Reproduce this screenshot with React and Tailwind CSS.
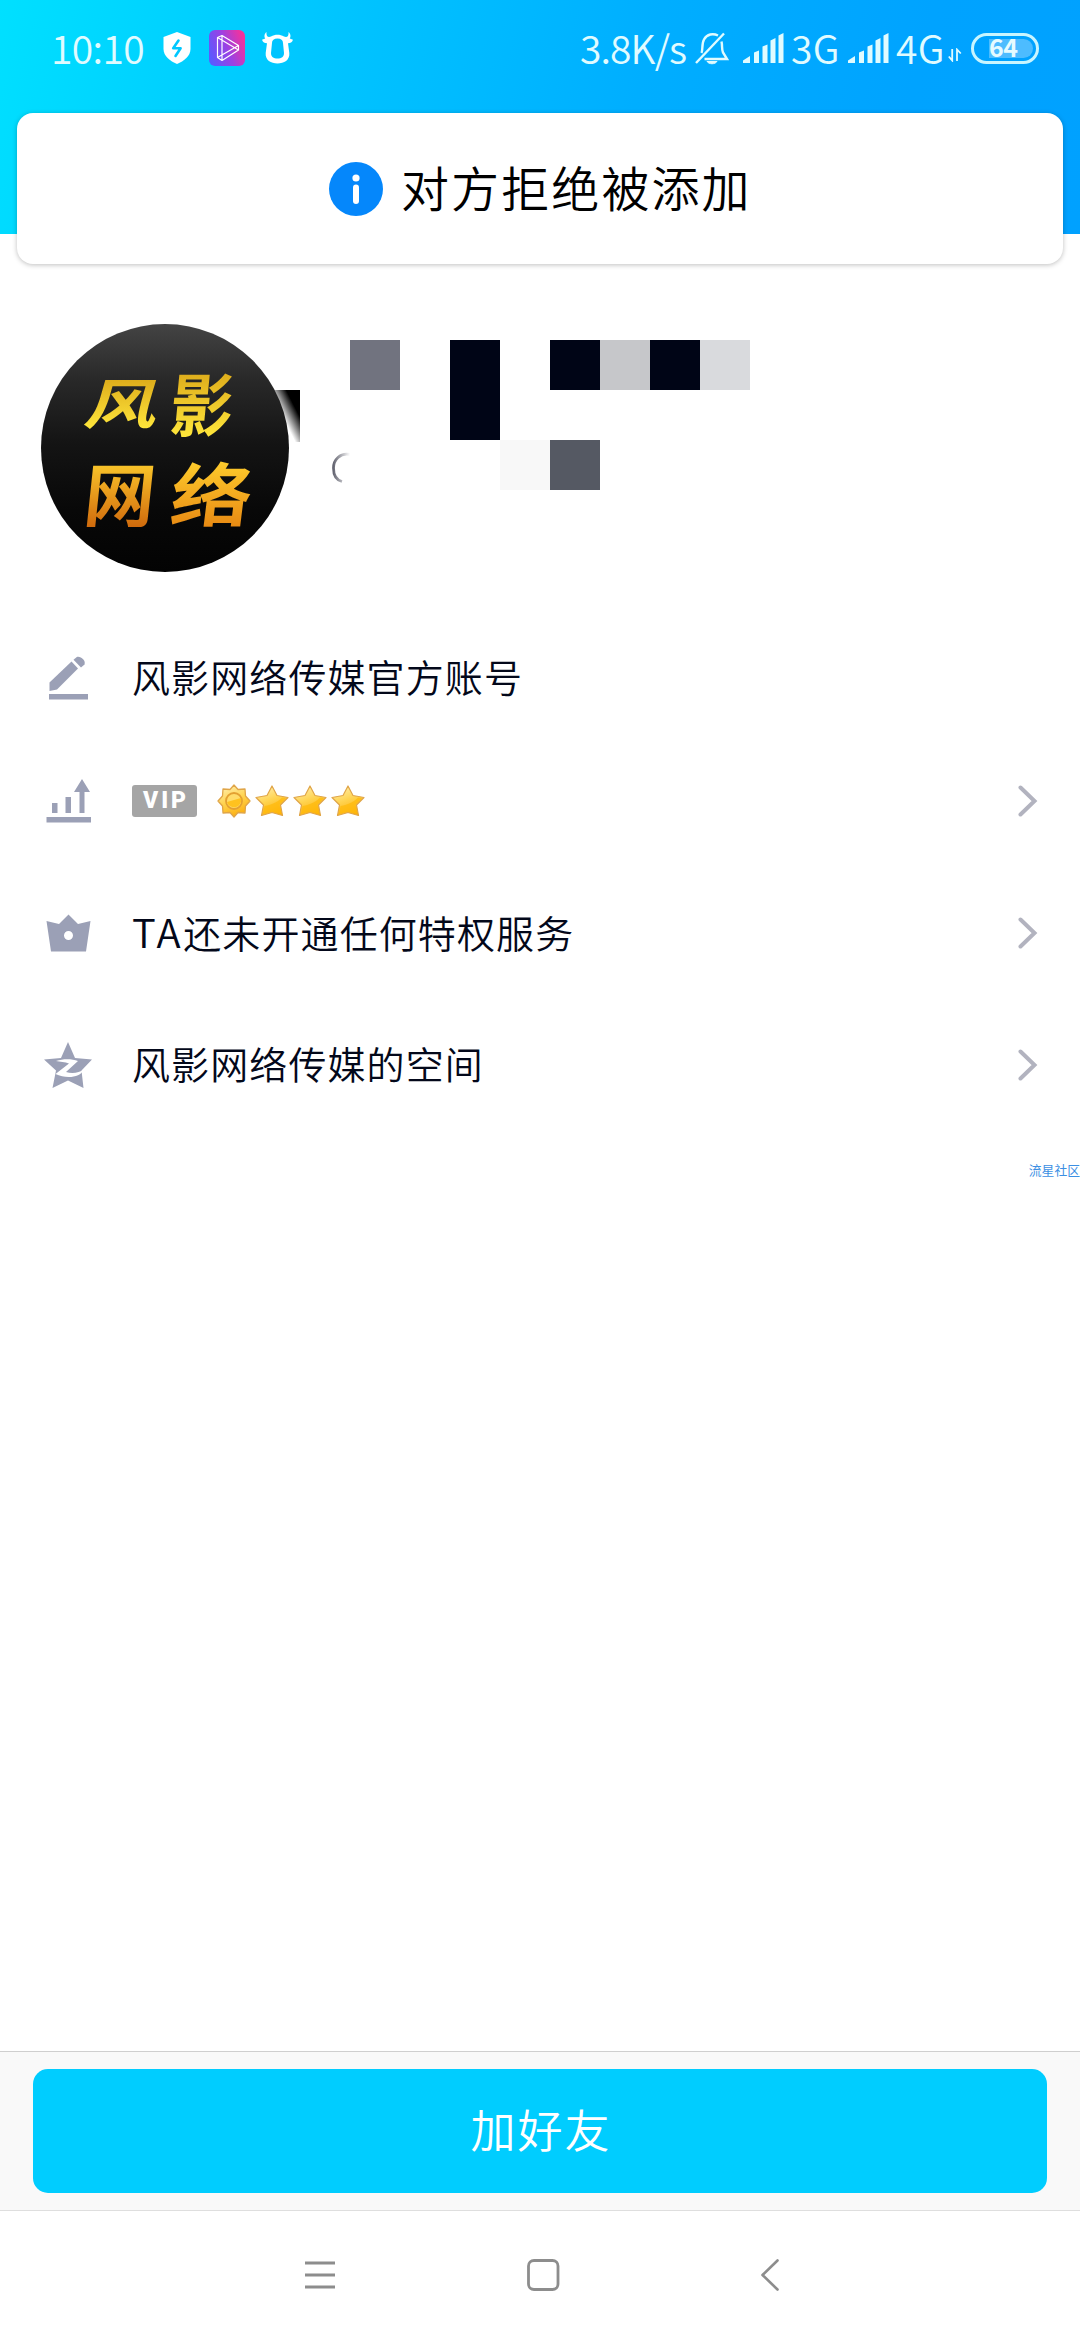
import React from 'react';

const mosaicRows = [
    ['bg-[#71737f]', '', 'bg-[#000516]', '', 'bg-[#000516]', 'bg-[#c6c7ca]', 'bg-[#000516]', 'bg-[#d9dadd]'],
    ['', '', 'bg-[#000516]', '', '', '', '', ''],
    ['', '', '', 'bg-[#f8f8f8]', 'bg-[#555963]', '', '', ''],
];

const SignalIcon = ({ className }) => (
    <svg className={className} width="41" height="30" viewBox="0 0 41 30" fill="#e0fbff">
        <path d="M0 30V27.5L7 23V30Z" />
        <path d="M11 30V19.5L16 17.5V30Z" />
        <path d="M19.5 30V13.5L24.5 11.5V30Z" />
        <path d="M27.5 30V7.5L32.5 5V30Z" />
        <path d="M35.5 30V2.5L40.5 0V30Z" />
    </svg>
);

const StatusText = ({ className, children }) => (
    <div className={`-mt-[3px] whitespace-nowrap ${className}`}>{children}</div>
);

const StatusBar = () => (
    <div className="flex h-[113px] items-start pt-[30px] text-[39px] leading-[40px] font-[350] text-[#e0fbff]">
        <StatusText className="ml-[51px] w-[112px] tracking-[-0.6px]">10:10</StatusText>
        <svg className="mt-[2px]" width="28" height="32" viewBox="0 0 28 32">
            <path d="M14 0L27.5 5V17C27.5 24 21 29 14 32C7 29 .5 24 .5 17V5Z" fill="#fff" />
            <path d="M15.5 8.5L10.2 16.2H17.6L12.5 24" fill="none" stroke="#00c8ff" strokeWidth="2.6" strokeLinejoin="round" strokeLinecap="round" />
        </svg>
        <svg className="ml-[18px]" width="36" height="36" viewBox="0 0 36 36">
            <defs>
                <linearGradient id="player" x1="0" y1=".7" x2="1" y2=".3">
                    <stop offset="0" stopColor="#5a5aff" />
                    <stop offset=".5" stopColor="#9a42e4" />
                    <stop offset="1" stopColor="#f5329b" />
                </linearGradient>
            </defs>
            <rect width="36" height="36" rx="6" fill="url(#player)" />
            <path d="M8.5 7.5L13 5.5L29.5 15.5V20L13 30.5L8.5 27.5ZM13 5.5V30.5M8.5 7.5L29.5 20M8.5 27.5L29.5 15.5" fill="none" stroke="#fff" strokeWidth="1.2" strokeLinejoin="round" />
        </svg>
        <svg className="ml-[17px] mt-[2px]" width="31" height="32" viewBox="0 0 31 32">
            <path d="M4.500 0C4 4 6 6 9 4.500C13 2 18 2 22 4.500C25 6 27 4 26.500 0C29 2 28.800 5 27.800 6.500L31 7.800C30 10.500 28.500 11.300 26 11.300L27.300 21C28 28 22 31.500 15.500 31.500C9 31.500 3 28 3.700 21L5 11.300C2.500 11.300 1 10.500 0 7.800L3.200 6.500C2.200 5 2 2 4.500 0Z" fill="#fff" />
            <path d="M10 11C10 8 12 6.500 15.500 6.500S21 8 21 11L22 21C22 25 19.500 26.500 15.500 26.500S9 25 9 21Z" fill="#00c4ff" />
        </svg>

        <StatusText className="ml-[287px] w-[115px] tracking-[-0.9px]">3.8K/s</StatusText>
        <svg className="mt-[2px]" width="34" height="33" viewBox="0 0 34 33" fill="none" stroke="#e0fbff" strokeWidth="2.4">
            <path d="M1 31L29 1.500" />
            <path d="M6.500 21C8 18 6.500 12 9 7.500C12 2 18 1 23 3.500" />
            <path d="M26.500 9.500C27.500 14 26.500 17 28 20.500L32 27H9.500" />
            <path d="M12 29.500H22C20 32.500 14 32.500 12 29.500Z" fill="#e0fbff" strokeWidth="1" />
        </svg>
        <SignalIcon className="ml-[14px] mt-[3px]" />
        <StatusText className="ml-[7px] w-[57px] tracking-[0.3px]">3G</StatusText>
        <SignalIcon className="mt-[3px]" />
        <StatusText className="ml-[7px] w-[52px] tracking-[0.3px]">4G</StatusText>
        <svg className="mt-[18px]" width="14" height="14" viewBox="0 0 14 14" fill="none" stroke="#e0fbff" strokeWidth="1.8">
            <path d="M4.200 1V12.500L.8 8.500M9 13V1.500L12.800 5.500" />
        </svg>
        <div className="ml-[9px] mt-[3px] flex h-[31px] w-[68px] rounded-full border-[3px] border-[#c8f5ff] p-[3px]">
            <div className="ml-[12px] flex flex-1 items-center rounded-r-full bg-[#4dbcff] text-[25px] leading-none font-bold tracking-[-0.5px] text-[#e6fbff]">
                <span className="relative -top-[2px]">64</span>
            </div>
        </div>
    </div>
);

const Avatar = () => (
    <div className="relative h-[248px] w-[248px]">
        {/* leftover edge of the mosaic */}
        <div className="absolute top-[66px] left-[223px] h-[52px] w-[36px] bg-[linear-gradient(63deg,#fff_0%,#fff_50%,#000_78%)]" />
        <div className="relative h-[248px] w-[248px] overflow-hidden rounded-full bg-[linear-gradient(180deg,#444_0%,#292929_22%,#141414_48%,#080808_75%,#030303_100%)] font-bold">
            <span className="absolute top-[49px] left-[57px] -skew-x-12 scale-x-135 bg-linear-to-b from-[#d9a516] to-[#ffe73b] bg-clip-text text-[54px] leading-[56px] text-transparent">风</span>
            <span className="absolute top-[44px] left-[130px] -skew-x-6 scale-y-110 bg-linear-to-b from-[#d9a516] to-[#ffe73b] bg-clip-text text-[63px] leading-[66px] text-transparent">影</span>
            <span className="absolute top-[131px] left-[44px] -skew-x-6 bg-linear-to-b from-[#ffd22e] to-[#cf6a0c] bg-clip-text text-[71px] leading-[72px] text-transparent">网</span>
            <span className="absolute top-[131px] left-[137px] -skew-x-6 scale-x-118 bg-linear-to-b from-[#ffd22e] to-[#e88a13] bg-clip-text text-[69px] leading-[72px] text-transparent">络</span>
        </div>
    </div>
);

const PencilIcon = () => (
    <svg width="48" height="48" viewBox="0 2 48 48" fill="#9ba0b6">
        <path d="M5.500 39V30.500L27.500 9.500L34 16.500L13 37.500Z" />
        <path d="M29.500 7.800L32.500 5.200C36 3.500 42 8 40.500 12.500L37 15.500Z" />
        <rect x="5" y="42" width="39" height="5.500" />
    </svg>
);

const LevelIcon = () => (
    <svg width="48" height="48" viewBox="0 2 48 48" fill="#9ba0b6">
        <rect x="8" y="28" width="5.500" height="10" />
        <rect x="21.500" y="22" width="5.500" height="16" />
        <path d="M35.500 38V17H30L38 4L46 17H40.500V38Z" />
        <rect x="2.500" y="42" width="44.500" height="5.500" />
    </svg>
);

const CrownIcon = () => (
    <svg width="48" height="48" viewBox="0 0 48 48" fill="#9ba0b6" fillRule="evenodd">
        <path d="M2.500 12L15 15L24.500 5.500L34 15L46.500 12L42 42.500H7ZM24.500 22A4.500 4.500 0 1 0 24.500 31A4.500 4.500 0 1 0 24.500 22Z" />
    </svg>
);

const ZoneIcon = () => (
    <svg width="48" height="48" viewBox="0 0 48 48">
        <path d="M24 1L31 17L48 18.500L37.500 29.500L39.500 47L24 39.500L8.500 47L12 29.500L0 18.500L17 17Z" fill="#9ba0b6" />
        <path d="M12 20C20 17.500 28 18 34 20L22 31C28 33 35 32 40 28.500C36 37 22 38 11.500 33L25 22.500C21 21 16 20.500 12 20Z" fill="#fff" />
    </svg>
);

const ChevronIcon = () => (
    <svg className="ml-auto" width="20" height="32" viewBox="0 0 20 32" fill="none" stroke="#b2b3bf" strokeWidth="4" strokeLinecap="round">
        <path d="M2.500 2.500L16.500 16L2.500 29.500" />
    </svg>
);

const SunBadge = () => (
    <svg width="34" height="34" viewBox="0 0 34 34">
        <path d="M17 1L21 5.500L28 5L28.500 12L33 17L28.500 22L28 29L21 28.500L17 33L13 28.500L6 29L5.500 22L1 17L5.500 12L6 5L13 5.500Z" fill="url(#gold)" stroke="#e0a548" strokeWidth="1.300" strokeLinejoin="round" />
        <circle cx="17" cy="17" r="8" fill="#ffdc6b" stroke="#e3a032" strokeWidth="1.800" />
        <path d="M10 18A7 7 0 0 0 24 14Z" fill="#ffc21f" />
    </svg>
);

const StarBadge = () => (
    <svg width="34" height="34" viewBox="0 0 34 34">
        <defs>
            <linearGradient id="gold" x1=".2" y1="0" x2=".6" y2="1">
                <stop offset="0" stopColor="#ffefb0" />
                <stop offset=".5" stopColor="#ffd34f" />
                <stop offset="1" stopColor="#fcae0c" />
            </linearGradient>
        </defs>
        <path d="M17 2L22 11.500L33 13.500L25.500 21L27.500 31.500L17 28.500L6.500 31.500L8.500 21L1 13.500L12 11.500Z" fill="url(#gold)" stroke="#e0a548" strokeWidth="1.200" strokeLinejoin="round" />
        <path d="M9.500 22C17 21 24 17 27 13.500L31 14.300L24.500 20.700L26.500 30.300L17 27.500L8 30Z" fill="#ffb908" opacity=".7" />
    </svg>
);

const InfoRow = ({ icon, text, children, className }) => (
    <div className={`flex items-center pr-[42px] pl-[44px] ${className}`}>
        {icon}
        {text && <div className="ml-[40px] pb-[5px] text-[38px] leading-none tracking-[1.1px] text-[#03081a]">{text}</div>}
        {children}
    </div>
);

const App = () => {
    return (
        <div className="flex h-[2340px] w-[1080px] flex-col overflow-hidden bg-white font-['Noto_Sans_CJK_SC',sans-serif] font-[350]">
            <header className="h-[234px] shrink-0 bg-[linear-gradient(105deg,#00e0ff_0%,#00c3ff_32%,#00aeff_58%,#00a3ff_82%,#00a1ff_100%)]">
                <StatusBar />
                <div className="mx-[17px] flex h-[151px] items-center rounded-[16px] bg-white pl-[312px] shadow-[0_1px_5px_rgba(0,0,0,0.25)]">
                    <svg width="54" height="54" viewBox="0 0 54 54">
                        <circle cx="27" cy="27" r="27" fill="#0587fb" />
                        <circle cx="27" cy="16" r="3.600" fill="#fff" />
                        <path d="M27 25.500V39" stroke="#fff" strokeWidth="6" strokeLinecap="round" />
                    </svg>
                    <h1 className="ml-[18px] pb-[6px] text-[48px] leading-none tracking-[2.1px] text-black">对方拒绝被添加</h1>
                </div>
            </header>

            <section className="mt-[90px] flex h-[248px] shrink-0 pl-[41px]">
                <Avatar />
                <svg className="mt-[128px] ml-[41px]" width="20" height="32" viewBox="0 0 20 32" fill="none">
                    <defs>
                        <linearGradient id="ring" x1="0" y1="0" x2="1" y2="0">
                            <stop offset="0" stopColor="#666773" />
                            <stop offset="1" stopColor="#666773" stopOpacity="0" />
                        </linearGradient>
                    </defs>
                    <path d="M20 2.500C10 .5 3.500 8 3.500 16C3.500 23 6.500 28 12 29.500" stroke="url(#ring)" strokeWidth="2.800" />
                </svg>
                <div className="mt-[16px] grid h-[150px] w-[400px] grid-cols-8 grid-rows-3">
                    {mosaicRows.flat().map((color, i) => (
                        <div key={i} className={color} />
                    ))}
                </div>
            </section>

            <section className="mt-[44px] shrink-0">
                <InfoRow icon={<PencilIcon />} text="风影网络传媒官方账号" className="h-[124px]" />
                <InfoRow icon={<LevelIcon />} className="h-[121px]">
                    <span className="ml-[40px] flex h-[32px] w-[65px] items-center justify-center rounded-[3px] bg-[#a5a5a5] pl-[3px] font-['Roboto',sans-serif] text-[23px] leading-none font-black tracking-[3px] text-white">VIP</span>
                    <span className="ml-[20px] flex gap-[4px]">
                        <SunBadge />
                        <StarBadge />
                        <StarBadge />
                        <StarBadge />
                    </span>
                    <ChevronIcon />
                </InfoRow>
                <InfoRow
                    icon={<CrownIcon />}
                    text={<><span className="text-[40px] tracking-[2.6px]">TA</span>还未开通任何特权服务</>}
                    className="mt-[6px] h-[132px]"
                >
                    <ChevronIcon />
                </InfoRow>
                <InfoRow icon={<ZoneIcon />} text="风影网络传媒的空间" className="h-[132px]">
                    <ChevronIcon />
                </InfoRow>
            </section>

            <div className="mt-[32px] text-right text-[12.800px] leading-[14px] font-normal text-[#3c8fe3]">流星社区</div>

            <footer className="mt-auto shrink-0">
                <div className="h-[160px] border-t border-b border-t-[#cfcfcf] border-b-[#dedede] bg-[#f9f9f9] px-[33px] pt-[17px]">
                    <button className="flex h-[124px] w-full items-center justify-center rounded-[15px] bg-[#00cdff] pb-[5px] pl-[2px] text-[45px] leading-none tracking-[2px] text-white">加好友</button>
                </div>
                <nav className="flex h-[129px] items-start pt-[48px] pl-[304px]">
                    <svg width="32" height="32" viewBox="0 0 32 32" stroke="#8d8d8d" strokeWidth="2.800">
                        <path d="M1 4H31M1 16H31M1 28H31" />
                    </svg>
                    <svg className="ml-[190px]" width="34" height="32" viewBox="0 0 34 32" fill="none" stroke="#8d8d8d" strokeWidth="2.800">
                        <rect x="2.500" y="1.500" width="29.500" height="29" rx="5.500" />
                    </svg>
                    <svg className="ml-[200px]" width="20" height="32" viewBox="0 0 20 32" fill="none" stroke="#8d8d8d" strokeWidth="2.600" strokeLinecap="round" strokeLinejoin="round">
                        <path d="M17.500 1.500L2.500 16L17.500 30.500" />
                    </svg>
                </nav>
            </footer>
        </div>
    );
};

export default App;
